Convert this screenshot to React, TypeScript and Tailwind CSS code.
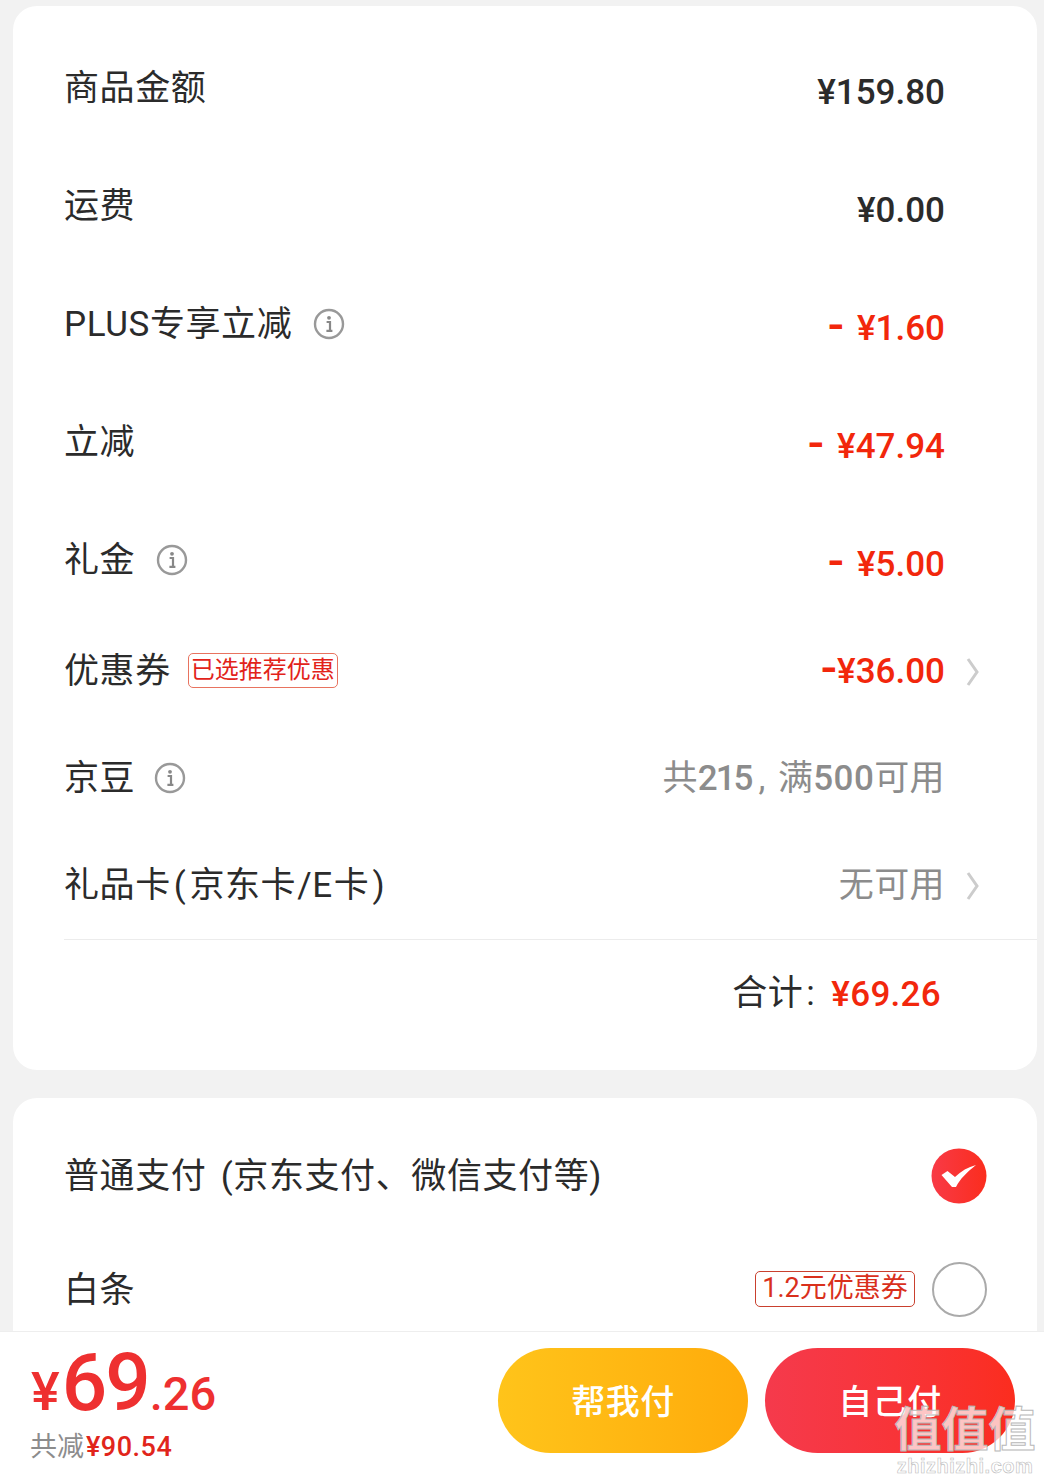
import React from "react";

const cjk = "font-['Roboto','Noto_Sans_CJK_SC',sans-serif]";

const InfoIcon = () => (
  <svg width="32" height="32" viewBox="0 0 32 32" fill="none" className="shrink-0">
    <circle cx="16" cy="16" r="14" stroke="#999" strokeWidth="2.4" />
    <circle cx="16" cy="9.8" r="1.9" fill="#888" />
    <path d="M13.6 14h3.4v8.6M13.4 22.8h6" stroke="#888" strokeWidth="2.2" />
  </svg>
);

const Chevron = () => (
  <svg width="14" height="30" viewBox="0 0 14 30" fill="none">
    <path d="M2 2l9 13-9 13" stroke="#ccc" strokeWidth="3" />
  </svg>
);

// the minus in the picture is shorter and heavier than a normal hyphen at this size
const Minus = ({ gap }: { gap: string }) => (
  <span className={`${gap} align-[-1px] text-[48px] leading-[0] font-medium`}>-</span>
);

const Row = ({
  label,
  info,
  tag,
  value,
  valueClass,
  chevron,
  height,
  gap = "ml-[21px]",
}: {
  label: React.ReactNode;
  info?: boolean;
  tag?: string;
  value: React.ReactNode;
  valueClass: string;
  chevron?: boolean;
  height: string;
  gap?: string;
}) => (
  <div className={`flex shrink-0 items-center pl-[51px] pr-[57px] ${height}`}>
    <span className="text-[35px] leading-none text-[#2b2b2b] tracking-[0.6px] whitespace-nowrap">{label}</span>
    {info && (
      <span className={`${gap} flex`}>
        <InfoIcon />
      </span>
    )}
    {tag && (
      <span className="ml-[17px] -mt-0.5 h-[35px] w-[150px] rounded-[5px] border border-[#e8735f] text-center text-[24px] leading-[32px] text-[#e2231a] whitespace-nowrap">
        {tag}
      </span>
    )}
    <div className="ml-auto flex items-center">
      <span className={`${valueClass} whitespace-nowrap`}>{value}</span>
      <span className={`ml-[21px] flex w-[14px] ${chevron ? "" : "invisible"}`}>
        <Chevron />
      </span>
    </div>
  </div>
);

const amount = "text-[35px] leading-none font-medium";
const dark = `${amount} text-[#2b2b2b] mt-2`;
const red = `${amount} text-[#f2270c] mt-2`;
const gray = "text-[35px] leading-none text-[#8c8c8c] tracking-[0.4px]";

export default function App() {
  return (
    <div className={`relative flex h-[1484px] w-[1044px] flex-col overflow-hidden bg-[#f2f2f2] pt-1.5 ${cjk}`}>
      <div className="ml-[13px] mr-[7px] flex h-[1064px] shrink-0 flex-col rounded-[24px] bg-white pt-[23px]">
        <Row height="h-[118px]" label="商品金额" value="¥159.80" valueClass={dark} />
        <Row height="h-[118px]" label="运费" value="¥0.00" valueClass={dark} />
        <Row
          height="h-[118px]"
          label="PLUS专享立减"
          info
          value={
            <>
              <Minus gap="mr-[13px]" />¥1.60
            </>
          }
          valueClass={red}
        />
        <Row
          height="h-[118px]"
          label="立减"
          value={
            <>
              <Minus gap="mr-[13px]" />¥47.94
            </>
          }
          valueClass={red}
        />
        <Row
          height="h-[118px]"
          label="礼金"
          info
          value={
            <>
              <Minus gap="mr-[13px]" />¥5.00
            </>
          }
          valueClass={red}
        />
        <Row
          height="h-[105px]"
          label="优惠券"
          tag="已选推荐优惠"
          value={
            <>
              <Minus gap="mr-0" />¥36.00
            </>
          }
          valueClass={`${amount} text-[#f2270c]`}
          chevron
        />
        <Row
          height="h-[108px]"
          label="京豆"
          info
          gap="ml-[19px]"
          value={
            <>
              共<span className="font-medium tracking-[-2px]">215</span>
              <span className="ml-[7px] mr-[3px]">,</span> 满<span className="font-medium">500</span>可用
            </>
          }
          valueClass={gray}
        />
        <Row
          height="h-[107px]"
          label={
            <>
              礼品卡<span className="mx-[3px]">(</span>京东卡<span className="mx-[1px]">/E</span>卡<span className="ml-[3px]">)</span>
            </>
          }
          value="无可用"
          valueClass={gray}
          chevron
        />
        <div className="ml-[51px] flex flex-1 items-center justify-end border-t border-[#ececec] pb-[24px] pr-[96px]">
          <span className="text-[35px] leading-none tracking-[0.5px] text-[#2b2b2b]">合计<span className="ml-[3px]">:</span></span>
          <span className="ml-[16px] mt-0.5 text-[35px] leading-none font-medium tracking-[0.3px] text-[#f2270c]">¥69.26</span>
        </div>
      </div>

      <div className="ml-[13px] mr-[7px] mt-7 flex h-[233px] shrink-0 flex-col overflow-hidden rounded-t-[24px] bg-white pt-[22px] pl-[51px] pr-[50px]">
        <div className="flex h-[112px] shrink-0 items-center">
          <span className="text-[35px] leading-none tracking-[0.6px] text-[#2b2b2b]">
            普通支付 <span className="ml-[5px]">(</span>京东支付、微信支付等)
          </span>
          <svg width="56" height="56" viewBox="0 0 56 56" className="ml-auto">
            <defs>
              <linearGradient id="checkFill" x1="0" x2="1" y1="0" y2="0">
                <stop offset="0" stopColor="#f83a46" />
                <stop offset="1" stopColor="#fb2d1e" />
              </linearGradient>
            </defs>
            <circle cx="28" cy="28" r="27.5" fill="url(#checkFill)" />
            <path d="M10.5 27L16.500 23L24 29C30 23 37 19 45 17C36 24 29 31 25 39L21 39Z" fill="#fff" />
          </svg>
        </div>
        <div className="flex h-[114px] shrink-0 items-center">
          <span className="mt-0.5 text-[35px] leading-none tracking-[0.6px] text-[#2b2b2b]">白条</span>
          <span className="ml-auto h-[36px] w-[160px] rounded-[5px] border border-[#c9402e] text-center text-[27px] leading-[33px] text-[#d9301c] whitespace-nowrap">
            1.2元优惠券
          </span>
          <span className="ml-[17px] h-[55px] w-[55px] rounded-full border-2 border-[#aaaaaa]" />
        </div>
      </div>

      <div className="flex h-[153px] shrink-0 items-start justify-between border-t border-[#eeeeee] bg-white pl-[30px] pr-[29px]">
        <div className="flex flex-col">
          <div className="flex h-[88px] items-baseline pt-[11px] font-medium text-[#ee3030]">
            <span className="ml-[1px] text-[54px] leading-none">¥</span>
            <span className="ml-[2px] text-[80px] leading-none tracking-[-2px]">69</span>
            <span className="ml-[1px] text-[47px] leading-none">.26</span>
          </div>
          <div className="mt-[14px] flex items-baseline text-[27px] leading-none">
            <span className="text-[#8c8c8c]">共减</span>
            <span className="ml-[2px] font-medium tracking-[0.5px] text-[#e1251b]">¥90.54</span>
          </div>
        </div>
        <div className="mt-4 flex gap-[17px]">
          <button className="h-[105px] w-[250px] rounded-full bg-gradient-to-r from-[#ffc41a] to-[#ffab0a] pt-1 text-[34px] font-medium tracking-[0.5px] text-white">
            帮我付
          </button>
          <button className="h-[105px] w-[250px] rounded-full bg-gradient-to-r from-[#f53a4c] to-[#fb2d1e] pt-1 text-[34px] font-medium tracking-[0.5px] text-white">
            自己付
          </button>
        </div>
      </div>

      {/* site watermark sits over the button */}
      <div className="pointer-events-none absolute left-[894px] top-[1398px] w-[142px] text-center font-['Noto_Sans_CJK_SC',sans-serif] text-[#ffffffb8] [-webkit-text-stroke:1px_#b9b9b9]">
        <div className="text-[47px] font-bold leading-[56px] whitespace-nowrap">值值值</div>
        <div className="mt-[1px] text-[20px] leading-[22px] font-['Liberation_Sans',sans-serif] font-bold tracking-[0.5px] [-webkit-text-stroke:0.6px_#bdbdbd]">
          zhizhizhi.com
        </div>
      </div>
    </div>
  );
}
